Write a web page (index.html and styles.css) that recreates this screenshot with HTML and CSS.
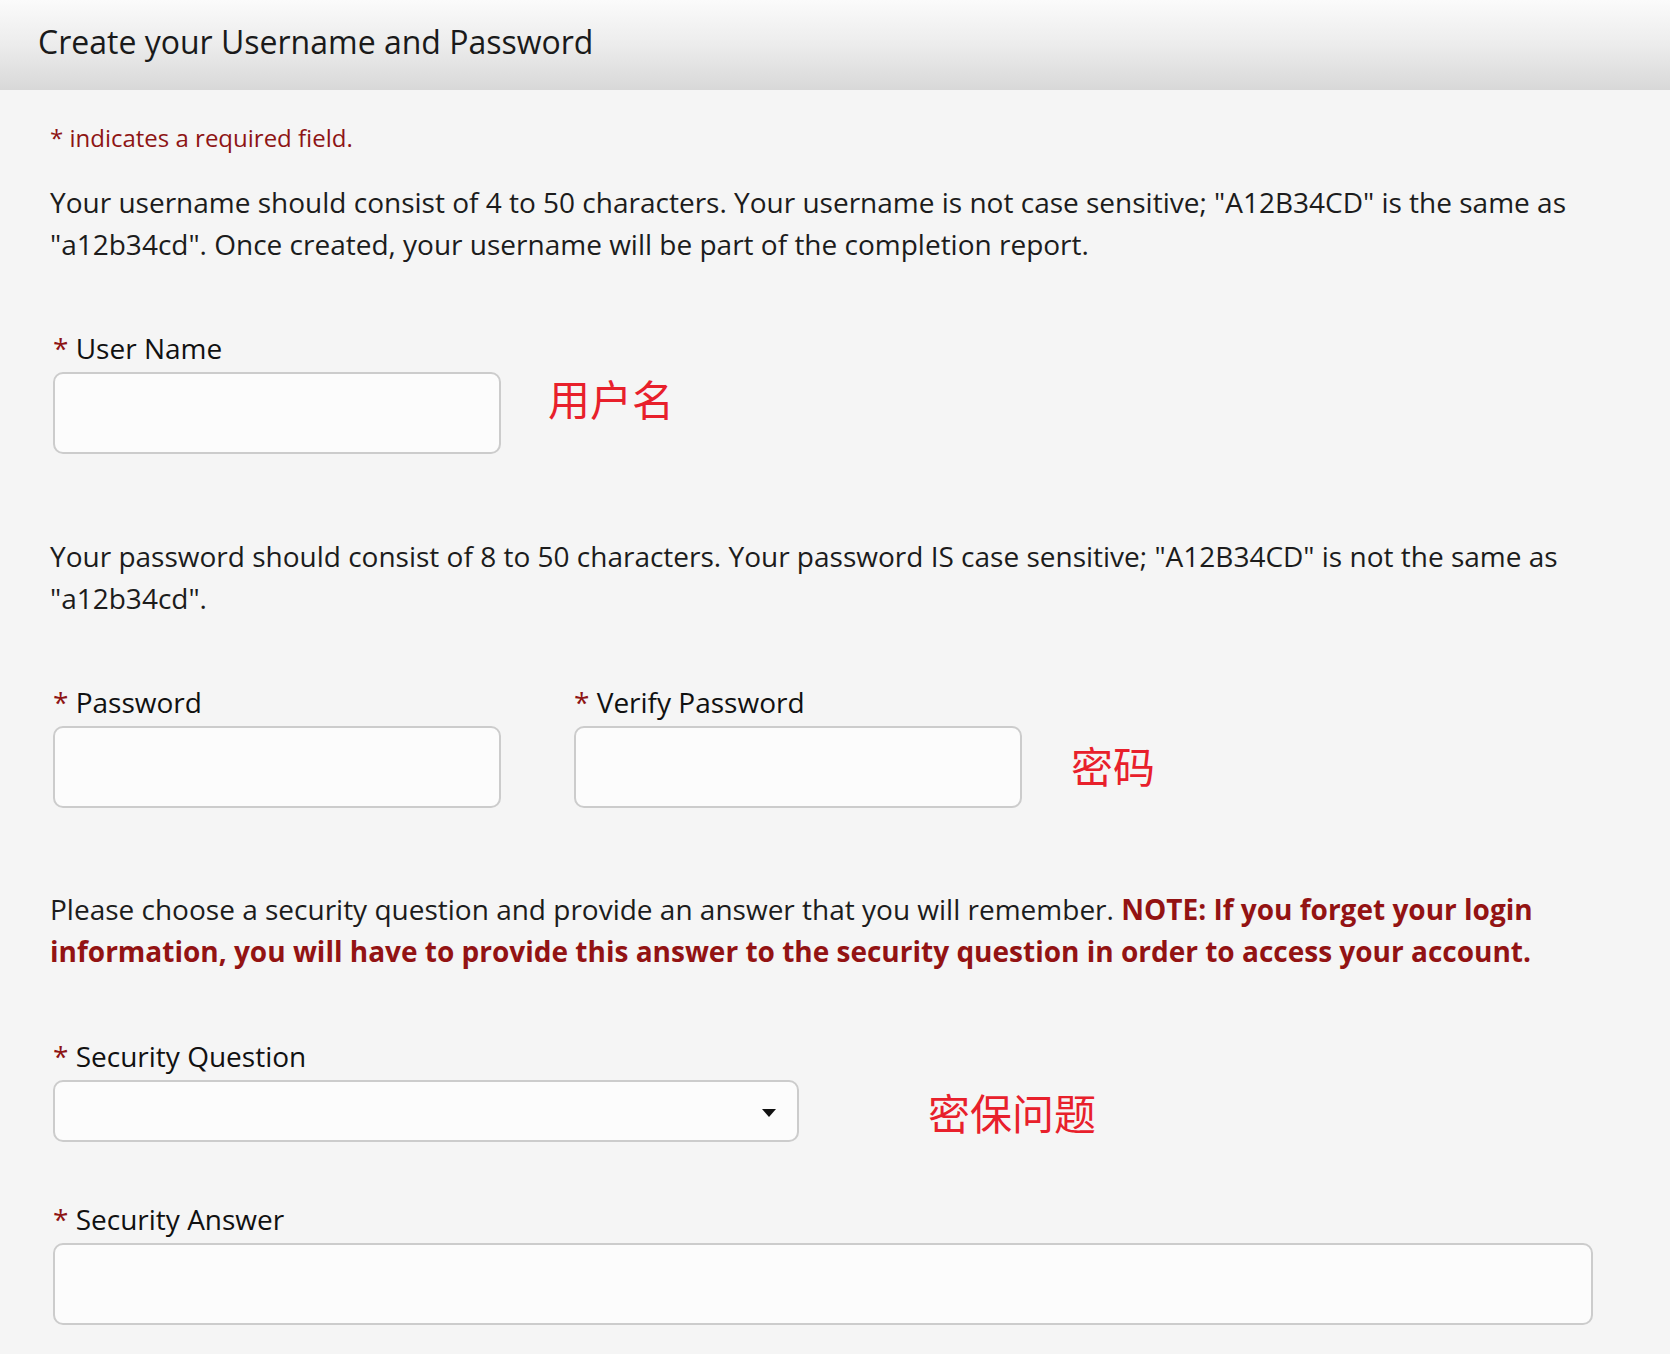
FILE: index.html
```html
<!DOCTYPE html>
<html lang="en">
<head>
<meta charset="utf-8">
<title>Create your Username and Password</title>
<link rel="stylesheet" href="styles.css">
</head>
<body>
<header class="page-header">
  <h1 class="page-title">Create your Username and Password</h1>
</header>
<main class="form-body">
  <p class="req-note">* indicates a required field.</p>
  <p class="info">Your username should consist of 4 to 50 characters. Your username is not case sensitive; "A12B34CD" is the same as "a12b34cd". Once created, your username will be part of the completion report.</p>

  <div class="row row-user">
    <div class="field">
      <label class="label"><span class="star">*</span> User Name</label>
      <input class="text-input" type="text">
    </div>
    <span class="note note-user">用户名</span>
  </div>

  <p class="info info-pw">Your password should consist of 8 to 50 characters. Your password IS case sensitive; "A12B34CD" is not the same as "a12b34cd".</p>

  <div class="row row-pw">
    <div class="field">
      <label class="label"><span class="star">*</span> Password</label>
      <input class="text-input" type="password">
    </div>
    <div class="field field-verify">
      <label class="label"><span class="star">*</span> Verify Password</label>
      <input class="text-input" type="password">
    </div>
    <span class="note note-pw">密码</span>
  </div>

  <p class="info info-sq">Please choose a security question and provide an answer that you will remember. <strong class="warn">NOTE: If you forget your login information, you will have to provide this answer to the security question in order to access your account.</strong></p>

  <div class="row row-sq">
    <div class="field">
      <label class="label"><span class="star">*</span> Security Question</label>
      <div class="select-box">
        <span class="caret"></span>
      </div>
    </div>
    <span class="note note-sq">密保问题</span>
  </div>

  <div class="row row-sa">
    <div class="field field-wide">
      <label class="label"><span class="star">*</span> Security Answer</label>
      <input class="text-input text-wide" type="text">
    </div>
  </div>
</main>
</body>
</html>
```

FILE: styles.css
```css
html, body {
  margin: 0;
  padding: 0;
}
body {
  background: #f5f5f5;
  font-family: "Open Sans", "Noto Sans", sans-serif;
  color: #222;
  width: 1670px;
  height: 1354px;
  overflow: hidden;
}
.page-header {
  height: 90px;
  background: linear-gradient(to bottom, #fbfbfb 0%, #ececec 50%, #d8d8d8 100%);
  display: flex;
  align-items: center;
  padding-left: 38px;
  box-sizing: border-box;
}
.page-title {
  margin: 0;
  font-weight: 400;
  font-size: 32px;
  line-height: 40px;
  color: #1a1a1a;
  padding-bottom: 6px;
}
.form-body {
  padding: 0 50px;
}
.req-note {
  margin: 33px 0 0;
  font-size: 24px;
  line-height: 30px;
  color: #8e1414;
}
.info {
  margin: 28px 0 0;
  font-size: 28px;
  line-height: 42px;
  color: #1c1c1c;
}
.info-pw {
  margin-top: 81px;
}
.info-sq {
  margin-top: 80px;
}
.warn {
  color: #931313;
  font-weight: 700;
}
.row {
  display: flex;
  align-items: flex-end;
  padding-left: 3px;
}
.row-user {
  margin-top: 66px;
}
.row-pw {
  margin-top: 66px;
}
.field-verify {
  margin-left: 73px;
}
.row-sq {
  margin-top: 67px;
}
.row-sa {
  margin-top: 60px;
}
.field {
  display: flex;
  flex-direction: column;
}
.field-wide {
  flex: 1;
}
.label {
  font-size: 28px;
  line-height: 34px;
  color: #111;
  margin-bottom: 7px;
}
.star {
  color: #8e1414;
}
.text-input {
  width: 448px;
  height: 82px;
  box-sizing: border-box;
  border: 2px solid #cccccc;
  border-radius: 10px;
  background: #fcfcfc;
  margin: 0;
  padding: 0 14px;
  font: inherit;
  outline: none;
}
.text-wide {
  width: 1540px;
}
.select-box {
  width: 746px;
  height: 62px;
  box-sizing: border-box;
  border: 2px solid #cccccc;
  border-radius: 10px;
  background: #fcfcfc;
  position: relative;
}
.caret {
  position: absolute;
  right: 21px;
  top: 27px;
  width: 0;
  height: 0;
  border-left: 7px solid transparent;
  border-right: 7px solid transparent;
  border-top: 8px solid #111;
}
.note {
  font-family: "Noto Sans CJK SC", "Noto Sans CJK JP", sans-serif;
  color: #e8202b;
  font-size: 42px;
  line-height: 50px;
  white-space: nowrap;
}
.note-user {
  margin-left: 47px;
  margin-bottom: 31px;
}
.note-pw {
  margin-left: 49px;
  margin-bottom: 18px;
}
.note-sq {
  margin-left: 129px;
  margin-bottom: 5px;
}
```
